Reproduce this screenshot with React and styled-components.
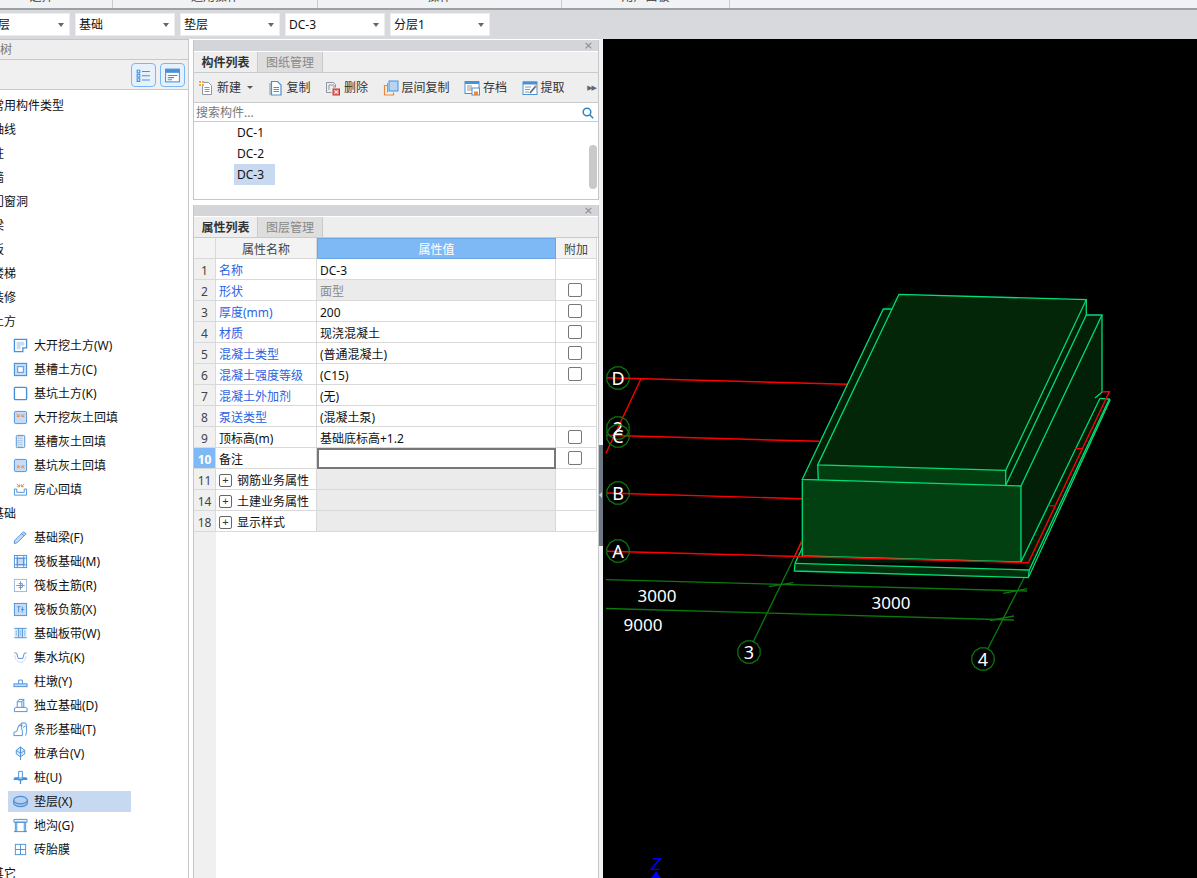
import React from 'react';
import styled, { createGlobalStyle } from 'styled-components';

const GlobalStyle = createGlobalStyle`
  html, body { margin:0; padding:0; background:#fff; overflow:hidden; }
  body { font-family:"Noto Sans","Noto Sans CJK SC",sans-serif; font-size:12px; color:#111; }
  * { box-sizing:border-box; }
`;

const Page = styled.div`
  width:1197px; height:878px; overflow:hidden;
  display:flex; flex-direction:column;
`;

const Ribbon = styled.div`
  height:10px; flex:none; display:flex; overflow:hidden;
  margin-left:-29px;
  background:#f1f2f3;
  border-bottom:2px solid #9da0a4;
`;
const RibbonCell = styled.div`
  width:${({w})=>w}px; height:8px; flex:none;
  display:flex; align-items:flex-end; justify-content:center;
  padding-bottom:4px; line-height:14px; color:#444;
  border-right:1px solid #c9cbce;
`;

const FilterBar = styled.div`
  height:29px; flex:none; display:flex; gap:5px; align-items:flex-start;
  padding-top:3px; margin-left:-30px;
  background:#d7d9dc;
`;
const Select = styled.div`
  width:100px; height:23px; flex:none; background:#fff;
  border:1px solid #eceded;
  display:flex; align-items:center; justify-content:space-between;
  padding:0 5px 0 3px; line-height:21px; color:#111;
  &::after {
    content:''; border-left:3.5px solid transparent; border-right:3.5px solid transparent;
    border-top:4px solid #666;
  }
`;

const Workspace = styled.div`
  flex:1; min-height:0; display:flex;
`;

const LeftPanel = styled.div`
  width:189px; flex:none; overflow:hidden; display:flex; flex-direction:column;
  border-right:1px solid #c8c8c8;
`;
const LeftTitle = styled.div`
  height:21px; flex:none; margin-left:-24px; padding-left:0;
  background:#eee; border-top:1px solid #c4c6c9; border-bottom:1px solid #c8c8c8;
  line-height:19px; color:#777; width:213px;
`;
const LeftTools = styled.div`
  height:30px; flex:none; background:#f0f0f0; border-bottom:1px solid #c8c8c8;
  display:flex; justify-content:flex-end; gap:4px; padding:3px 3px 0 0;
`;
const ViewButton = styled.div`
  width:25px; height:24px; background:#e6f1fc; border:1.5px solid #7ab8f5; border-radius:4px;
  display:flex; align-items:center; justify-content:center;
`;
const Tree = styled.div`
  flex:1; min-height:0; padding-top:3px; background:#fff;
  display:flex; flex-direction:column;
`;
const GroupRow = styled.div`
  flex:none; height:24px; line-height:26px; margin-left:-8px; white-space:nowrap; color:#111;
`;
const ItemRow = styled.div`
  flex:none; width:123px; height:21px; margin:1.5px 0 1.5px 8px; padding-left:5px;
  display:flex; align-items:center; gap:6px; white-space:nowrap; line-height:21px;
  background:${({selected})=>selected ? '#c7d9f0' : 'transparent'};
  svg { flex:none; }
`;

const MiddleColumn = styled.div`
  width:410px; flex:none; padding:1px 0 0 4px; display:flex; flex-direction:column; gap:5px;
  background:#fff;
`;
const Panel = styled.div`
  display:flex; flex-direction:column; overflow:hidden;
  border:1px solid #c4c7cc; border-top:0;
  border-bottom-width:${({h})=>h ? 1 : 0}px;
  height:${({h})=>h ? `${h}px` : 'auto'};
  flex:${({h})=>h ? 'none' : '1'};
  min-height:0;
  width:406px;
`;
const PanelTitle = styled.div`
  height:11px; flex:none; background:#d3d5d9; color:#888;
  display:flex; align-items:center; justify-content:flex-end; padding-right:5px;
  font-size:11px; line-height:11px;
  font-family:"DejaVu Sans",sans-serif;
`;
const TabBar = styled.div`
  height:22px; flex:none; display:flex; background:#eee;
  border-top:1px solid #fff; border-bottom:1px solid #c8cacd;
`;
const Tab = styled.div`
  width:${({active})=>active ? 64 : 65}px; text-align:center; line-height:22px;
  background:${({active})=>active ? '#eee' : '#dedede'};
  color:${({active})=>active ? '#333' : '#888'};
  font-weight:${({active})=>active ? 700 : 400};
  border-right:1px solid #c8cacd;
`;
const Toolbar = styled.div`
  height:30px; flex:none; background:#eee; border-bottom:1px solid #c8cacd;
  display:flex; align-items:center; gap:14.5px; padding-left:4px; position:relative;
`;
const ToolButton = styled.div`
  display:flex; align-items:center; gap:3px; white-space:nowrap; color:#333; line-height:16px;
`;
const Caret = styled.span`
  margin-left:3px; border-left:3px solid transparent; border-right:3px solid transparent;
  border-top:3px solid #555;
`;
const MoreArrows = styled.span`
  position:absolute; right:2px; top:11px; color:#666; font-size:7px; line-height:8px; letter-spacing:-1px;
  font-family:"DejaVu Sans",sans-serif;
`;
const SearchBox = styled.div`
  height:19px; flex:none; background:#fff; border-bottom:1px solid #c8cacd;
  display:flex; align-items:center; justify-content:space-between; padding:2px 4px 0 2px;
  color:#777; line-height:16px;
`;
const ComponentList = styled.div`
  flex:1; min-height:0; background:#fff; padding-left:40px; position:relative;
`;
const ComponentRow = styled.div`
  width:41px; height:21px; line-height:21px; padding-left:3px; color:#111;
  background:${({selected})=>selected ? '#c7d9f0' : 'transparent'};
`;
const ScrollThumb = styled.div`
  position:absolute; right:1px; top:23px; width:8px; height:44px; border-radius:4px; background:#c9c9c9;
`;

const PropGrid = styled.div`
  display:grid; flex:none; grid-template-columns:22px 101px 239px 41px; grid-auto-rows:21px;
`;
const Cell = styled.div`
  border-right:1px solid #d9d9d9; border-bottom:1px solid #d9d9d9;
  line-height:24px; white-space:nowrap; overflow:hidden;
`;
const HeadCell = styled(Cell)`
  text-align:center; background:${({hot})=>hot ? '#7fb9f5' : '#f3f3f3'};
  color:${({hot})=>hot ? '#fff' : '#444'};
  ${({hot})=>hot ? 'border:1px solid #6aa6e6;line-height:22px;' : ''}
`;
const NumCell = styled(Cell)`
  text-align:center; background:${({hot})=>hot ? '#7fb9f5' : '#f0f0f0'};
  color:${({hot})=>hot ? '#fff' : '#444'};
  font-weight:${({hot})=>hot ? 700 : 400};
`;
const NameCell = styled(Cell)`
  padding:3px 0 0 3px; line-height:18px; color:${({link})=>link ? '#2b62e3' : '#111'};
  display:flex; align-items:center;
`;
const ValueCell = styled(Cell)`
  padding-left:3px;
  background:${({grey})=>grey ? '#ebebeb' : '#fff'};
  color:${({muted})=>muted ? '#8a8a8a' : '#111'};
  ${({editing})=>editing ? 'border:2px solid #777;' : ''}
`;
const CheckCell = styled(Cell)`
  display:flex; justify-content:center; padding-top:3px; padding-right:2px;
`;
const CheckBox = styled.span`
  width:14px; height:14px; border:1px solid #777; border-radius:2px; background:#fff; display:block;
`;
const PlusBox = styled.span`
  width:13px; height:13px; flex:none; margin-right:5px; border:1px solid #666; border-radius:2px;
  display:flex; align-items:center; justify-content:center; font-size:11px; line-height:11px; color:#333;
  font-family:"Liberation Sans",sans-serif;
`;
const TableRest = styled.div`
  flex:1; min-height:0; background:#fff;
  &::before { content:''; display:block; width:22px; height:100%; background:#f0f0f0; }
`;

const Splitter = styled.div`
  width:4px; flex:none; background:#f2f2f2; position:relative;
`;
const SplitHandle = styled.div`
  position:absolute; left:0; top:406px; width:4px; height:101px; background:#6f7883;
  &::after {
    content:''; position:absolute; left:0; top:47px;
    border-top:3px solid transparent; border-bottom:3px solid transparent; border-right:3px solid #c9ccd0;
  }
`;
const Canvas = styled.div`
  flex:1; min-width:0; background:#000; overflow:hidden;
  svg { display:block; }
`;

const BLUE = '#4a90d9', LIGHT = '#c6dcf6', ORANGE = '#e8873a', GREY = '#8e979f';

const Svg = ({children, size=16}) => (
  <svg width={size} height={size} viewBox="0 0 16 16" fill="none" stroke={BLUE} strokeWidth="1">{children}</svg>
);

const treeIcons = {
  wa: <><path d="M1.500 1.500h13v9h-4v4h-9z" strokeWidth="1.400"/><path d="M4 4h8v4H8v4H4z" fill={LIGHT} stroke="none"/></>,
  cao: <><rect x="1.500" y="1.500" width="13" height="13" fill={LIGHT} strokeWidth="1.200"/><rect x="5" y="5" width="6" height="6" fill="#fff"/></>,
  keng: <rect x="1.500" y="1.500" width="13" height="13" rx="1" fill="#fff" strokeWidth="1.500"/>,
  wahui: <><rect x="1.500" y="1.500" width="13" height="13" rx="1.500" fill={LIGHT}/><path d="M3.500 4l3 3M6.500 4.500V7H4M12.500 4l-3 3M9.500 4.500V7H12" stroke={ORANGE}/></>,
  caohui: <><rect x="3.500" y="1.500" width="9" height="13" rx="1" fill="#e4eef9"/><path d="M5 3h6M5 5h6M5 7h6M5 9h6M5 11h6M5 13h6" stroke="#7a9cc6" strokeDasharray="1 1"/></>,
  kenghui: <><rect x="1.500" y="1.500" width="13" height="13" rx="1.500" fill={LIGHT}/><path d="M4 11l2.500-2.500M6.500 11V8.500H4M12 11L9.500 8.500M9.500 11V8.500H12" stroke={ORANGE}/></>,
  fang: <><path d="M1.500 7.500v6.500h13V7.500M1.500 7.500h2.500v3.500h8V7.500h2.500"/><path d="M4 2l3 3M7 2.500V5H4.500M12 2L9 5M9 2.500V5h2.500" stroke={ORANGE}/></>,
  liang: <><path d="M1.500 11.500L11 2l3 2-9.500 9.500-3 1z" fill={LIGHT}/><path d="M9 4l3 2"/></>,
  raft: <><rect x="1.500" y="1.500" width="13" height="13"/><rect x="4.500" y="4.500" width="7" height="7" fill={LIGHT}/><path d="M1.500 4.500h13M1.500 11.500h13M4.500 1.500v13M11.500 1.500v13"/></>,
  main: <><rect x="1.500" y="1.500" width="13" height="13" stroke="#9db6d4"/><path d="M8 3.500v9M3.500 8h9M6 6h4v4H6" stroke="#6d93bf"/></>,
  neg: <><rect x="1.500" y="1.500" width="13" height="13" fill={LIGHT}/><path d="M6 5v6M4.500 5H8M10 5v6M8.500 8H12"/></>,
  band: <><rect x="1.500" y="2.500" width="13" height="10" fill="#dbe8f7" stroke="none"/><path d="M1.500 2.500h13M1.500 12.500h13M6 2.500v10M10 2.500v10" /><path d="M3.500 5v6M8 5v6M12.500 5v6" strokeDasharray="1 1"/></>,
  sump: <><path d="M1.500 3L4 3.500 5.500 9h5L12 3.500 14.500 3"/><path d="M2 6q1 7 6 7t6-7" stroke="#8fb3da" strokeDasharray="1 1"/></>,
  pier: <><rect x="1" y="10.500" width="14" height="3" fill={LIGHT}/><path d="M6 10.500v-4h4v4"/></>,
  iso: <><path d="M1.500 11l2-1h10l1.500 1v3.500h-13.500z" fill="#fff"/><path d="M4.500 10V4l2-2.500h5V10M4.500 4h5v6M9.500 4l2-2.500"/></>,
  strip: <><path d="M1 14.500V11l3-1 2-6 3.500-3h4l1 3v6l-1 4.500"/><path d="M1 14.500h9V10l-1-4 .5-5M6 4h4"/><path d="M10.500 6l3-2" /></>,
  cap: <><path d="M8 1l4.500 3.500v4L8 11.500 3.500 8.500v-4z" fill="#dbe8f7"/><path d="M8 1v14M3.500 4.500L8 8l4.500-3.500" /></>,
  pile: <><path d="M6 1.500h4v7H6z" fill="#fff"/><path d="M1.500 8.500h4l.5 2h4l.5-2h4M1.500 8.500v1.500h13V8.500M8 11v4" strokeWidth="1.400"/></>,
  dian: <><path d="M.7 6.500v3c0 2.200 3.300 4 7.300 4s7.300-1.800 7.300-4v-3" fill="#a9c8ec" strokeWidth="1.300"/><ellipse cx="8" cy="6.500" rx="7.300" ry="4" fill="#b4cfef" strokeWidth="1.300"/></>,
  digou: <><path d="M1 1.500h14v3H1zM1 14.500h14M2.500 4.500H4v10H2.500zM12 4.500h1.500v10H12z" fill="#eef5fc"/><path d="M4 4.500h8" /></>,
  zhuo: <><rect x="2.500" y="2.500" width="11" height="11" /><path d="M8 2.500v11M2.500 8h11"/></>,
};

const TreeIcon = ({name}) => <Svg size={15}>{treeIcons[name]}</Svg>;

const toolIcons = {
  create: <><path d="M4.500 2.500h6l3 3v9h-9z" fill="#fff" stroke={GREY}/><path d="M6.500 7.500h5M6.500 9.500h5M6.500 11.500h5" stroke={GREY}/><rect x="1" y="1" width="5" height="5" fill="#f2a640" stroke="none"/><path d="M1 3.500h5M3.500 1v5" stroke="#fff"/></>,
  copy: <><path d="M2 3v12" stroke={GREY}/><path d="M3.500 1.500h6l3.500 3.500v10h-9.500z" fill="#fff" strokeWidth="1.200"/><path d="M5.500 7.500h5.500M5.500 9.500h5.500M5.500 11.500h5.500"/></>,
  remove: <><path d="M1.500 2.500h7l2 2v3M1.500 2.500v10h5" stroke={GREY}/><path d="M4 5h5v3M4 5v5" stroke={GREY}/><rect x="8" y="9" width="6.500" height="6" fill="#e47a7a" stroke="#c33"/><path d="M9.500 10.500l3.500 3M13 10.500l-3.500 3" stroke="#fff"/></>,
  layer: <><path d="M4.500 5.500H1.500v9.500h9v-2.500" stroke={ORANGE} strokeWidth="1.200"/><path d="M4.500 3v9.500" stroke={ORANGE} strokeWidth="1"/><rect x="6" y="1" width="9" height="10" fill="#b8d4f5" strokeWidth="1"/></>,
  archive: <><rect x="1" y="1.500" width="14" height="12" fill="#fff"/><rect x="1" y="1" width="14" height="3" fill={BLUE} stroke="none"/><path d="M3 6h5M3 8h5M3 10h5" stroke={GREY}/><rect x="8" y="8" width="7.500" height="7" fill="#fff"/><rect x="10" y="11.500" width="4" height="3.500" fill={ORANGE} stroke="none"/></>,
  extract: <><rect x="1" y="2" width="14" height="12.500" fill="#fff"/><rect x="1" y="1.500" width="14" height="3" fill={BLUE} stroke="none"/><path d="M3 7h6M3 9.500h5M3 12h4" stroke={GREY}/><path d="M8 13l5.500-6.500" stroke="#5a6b7a" strokeWidth="1.800"/><path d="M13 5.500l1.500 1.500" stroke={ORANGE} strokeWidth="1.500"/></>,
};

const ribbonCells = [['选择',142],['通用操作',205],['操作',244],['用户面板',168]];
const filters = ['基础层','基础','垫层','DC-3','分层1'];

const tree = [
  {g:'常用构件类型'},{g:'轴线'},{g:'柱'},{g:'墙'},{g:'门窗洞'},{g:'梁'},{g:'板'},{g:'楼梯'},{g:'装修'},{g:'土方'},
  {t:'大开挖土方(W)',i:'wa'},{t:'基槽土方(C)',i:'cao'},{t:'基坑土方(K)',i:'keng'},{t:'大开挖灰土回填',i:'wahui'},
  {t:'基槽灰土回填',i:'caohui'},{t:'基坑灰土回填',i:'kenghui'},{t:'房心回填',i:'fang'},
  {g:'基础'},
  {t:'基础梁(F)',i:'liang'},{t:'筏板基础(M)',i:'raft'},{t:'筏板主筋(R)',i:'main'},{t:'筏板负筋(X)',i:'neg'},
  {t:'基础板带(W)',i:'band'},{t:'集水坑(K)',i:'sump'},{t:'柱墩(Y)',i:'pier'},{t:'独立基础(D)',i:'iso'},
  {t:'条形基础(T)',i:'strip'},{t:'桩承台(V)',i:'cap'},{t:'桩(U)',i:'pile'},{t:'垫层(X)',i:'dian',selected:true},
  {t:'地沟(G)',i:'digou'},{t:'砖胎膜',i:'zhuo'},
  {g:'其它'},
];

const tools = [
  {t:'新建',i:'create',caret:true},{t:'复制',i:'copy'},{t:'删除',i:'remove'},
  {t:'层间复制',i:'layer'},{t:'存档',i:'archive'},{t:'提取',i:'extract'},
];

const props = [
  {n:1,name:'名称',value:'DC-3',link:true},
  {n:2,name:'形状',value:'面型',link:true,check:true,grey:true,muted:true},
  {n:3,name:'厚度(mm)',value:'200',link:true,check:true},
  {n:4,name:'材质',value:'现浇混凝土',link:true,check:true},
  {n:5,name:'混凝土类型',value:'(普通混凝土)',link:true,check:true},
  {n:6,name:'混凝土强度等级',value:'(C15)',link:true,check:true},
  {n:7,name:'混凝土外加剂',value:'(无)',link:true},
  {n:8,name:'泵送类型',value:'(混凝土泵)',link:true},
  {n:9,name:'顶标高(m)',value:'基础底标高+1.2',check:true},
  {n:10,name:'备注',value:'',check:true,editing:true},
  {n:11,name:'钢筋业务属性',group:true,grey:true},
  {n:14,name:'土建业务属性',group:true,grey:true},
  {n:18,name:'显示样式',group:true,grey:true},
];

const EDGE = '#00dd77', RED = '#ff0000', DIM = '#0b7a0b';

const Bubble = ({x, y, label}) => {
  const pts = Array.from({length:12}, (_, i) => {
    const a = (i * Math.PI) / 6 + Math.PI / 12;
    return `${(x + 11.5 * Math.cos(a)).toFixed(1)},${(y + 11.5 * Math.sin(a)).toFixed(1)}`;
  }).join(' ');
  return (
    <g>
      <polygon points={pts} fill="none" stroke={DIM} strokeWidth="1.200" />
      <text x={x} y={y + 6.500} textAnchor="middle" fontSize="18" fill="#fff" fontFamily="Noto Sans, sans-serif">{label}</text>
    </g>
  );
};

const Line = ({d, c=EDGE, w=1.300}) => <path d={d} stroke={c} strokeWidth={w} fill="none" />;

const Model = () => (
  <svg width="594" height="839" viewBox="603 39 594 839">
    {/* grid lines behind the model */}
    <Line c={RED} w={1.400} d="M606.700 377.700L847.300 384.300" />
    <Line c={RED} w={1.400} d="M606.700 435.300L819.300 441.300" />
    <Line c={RED} w={1.400} d="M606.700 493L802.300 498.700" />
    <Line c={RED} w={1.400} d="M641 378.700L606 453.300" />
    <Line c={DIM} d="M606 579.700L1027 591" />
    <Line c={DIM} d="M606 608.500L1014 620" />
    <Line c={DIM} d="M769 586.700L793.300 582.700M1003.300 593.300L1027.300 588.700M990 620.500L1014 616" />
    <Line c={DIM} d="M753.300 641.700L801.700 541.700" />
    <Line c={DIM} d="M988 648.500L1024 578" />

    {/* base slab */}
    <polygon points="795,563.300 1029.300,570 1028.300,577.700 794.300,571" fill="#02300c" />
    <polygon points="795,563.300 802.300,548 1021,562 1029.300,570 1109.300,399 1100,398.300 1021,562" fill="#011a06" />
    <Line d="M795 563.300L1029.300 570L1109.300 399L1100 398.300" />
    <Line d="M795 563.300L794.300 571L1028.300 577.700L1110 400L1109.300 399" />
    <Line d="M1029.300 570L1028.300 577.700" />
    <Line d="M795 563.300L802.300 548" />

    {/* block */}
    <polygon points="883.300,309 899,294.300 1086.300,299.700 1086.300,315 1102,315 1102,392.300 1021,562 802.300,556 802.300,479.300" fill="#021f08" />
    <polygon points="899,294.300 1086.300,299.700 1005.700,470.300 817.700,465" fill="#032508" />
    <polygon points="817.700,465 1005.700,470.300 1005.700,485.300 818.300,480.300" fill="#023f10" />
    <polygon points="802.300,479.300 1021,486 1021,562 802.300,556" fill="#024012" />
    <Line d="M899 294.300L1086.300 299.700L1005.700 470.300L817.700 465L899 294.300Z" />
    <Line d="M817.700 465L818.300 480.300M1005.700 470.300V485.300" />
    <Line d="M891.700 309H883.300L802.300 479.300L1021 486V562L802.300 556V479.300" />
    <Line d="M1086.300 299.700V315H1102V392.300L1095 398" />
    <Line d="M1102 315L1021 486" />
    <Line d="M1086.300 315L1005.700 485.300" />
    <Line d="M1021 562L1100 398.300" />

    {/* red outline on top */}
    <Line c={RED} w={1.400} d="M606.700 551.300L1028.300 562.700L1109.300 391.700H1102" />
    <Line c={RED} w={1.400} d="M795 555.700L801.700 541" />
    <Line c={RED} w={1.200} d="M1075 448.300L1082.700 448.700M1048.300 505.700L1055.700 506" />

    <Bubble x={618} y={378} label="D" />
    <Bubble x={618} y={428} label="2" />
    <Bubble x={618} y={436} label="C" />
    <Bubble x={618} y={493} label="B" />
    <Bubble x={618} y={551} label="A" />
    <Bubble x={749} y={652} label="3" />
    <Bubble x={983} y={659} label="4" />

    <g fontFamily="Noto Sans, sans-serif" fontSize="17" fill="#fff" textAnchor="middle">
      <text x="657" y="602">3000</text>
      <text x="891" y="609">3000</text>
      <text x="643" y="631">9000</text>
    </g>
    <text x="656" y="870" textAnchor="middle" fontSize="16" fill="#0000ff" fontStyle="italic" fontFamily="Liberation Sans, sans-serif">Z</text>
    <polygon points="656,871 651,878 661,878" fill="#0000ff" />
  </svg>
);

const App = () => (
  <Page>
    <GlobalStyle />
    <Ribbon>
      {ribbonCells.map(([label, w]) => <RibbonCell key={label} w={w}>{label}</RibbonCell>)}
    </Ribbon>
    <FilterBar>
      {filters.map((f) => <Select key={f}>{f}</Select>)}
    </FilterBar>
    <Workspace>
      <LeftPanel>
        <LeftTitle>构件树</LeftTitle>
        <LeftTools>
          <ViewButton>
            <Svg size={17}><path d="M2 3h2.500v2.500H2zM2 7h2.500v2.500H2zM2 11h2.500v2.500H2zM6.500 4.200H14M6.500 8.200H14M6.500 12.200H14"/></Svg>
          </ViewButton>
          <ViewButton>
            <Svg size={17}><rect x="1.500" y="2" width="13" height="12" fill="#fff"/><rect x="1.500" y="2" width="13" height="3.500" fill={BLUE} stroke="none"/><path d="M3.500 8h9M3.500 10h6M3.500 12h4"/></Svg>
          </ViewButton>
        </LeftTools>
        <Tree>
          {tree.map((row) => row.g
            ? <GroupRow key={row.g}>{row.g}</GroupRow>
            : <ItemRow key={row.t} selected={row.selected}><TreeIcon name={row.i} />{row.t}</ItemRow>
          )}
        </Tree>
      </LeftPanel>

      <MiddleColumn>
        <Panel h={160}>
          <PanelTitle>×</PanelTitle>
          <TabBar><Tab active>构件列表</Tab><Tab>图纸管理</Tab></TabBar>
          <Toolbar>
            {tools.map((tool) => (
              <ToolButton key={tool.t}>
                <Svg>{toolIcons[tool.i]}</Svg>
                {tool.t}
                {tool.caret && <Caret />}
              </ToolButton>
            ))}
            <MoreArrows>▶▶</MoreArrows>
          </Toolbar>
          <SearchBox>
            搜索构件...
            <svg width="12" height="12" viewBox="0 0 12 12" fill="none" stroke="#2a86c8" strokeWidth="1.500">
              <circle cx="5" cy="5" r="3.800" /><path d="M8 8l3.200 3.200" />
            </svg>
          </SearchBox>
          <ComponentList>
            <ComponentRow>DC-1</ComponentRow>
            <ComponentRow>DC-2</ComponentRow>
            <ComponentRow selected>DC-3</ComponentRow>
            <ScrollThumb />
          </ComponentList>
        </Panel>

        <Panel>
          <PanelTitle>×</PanelTitle>
          <TabBar><Tab active>属性列表</Tab><Tab>图层管理</Tab></TabBar>
          <PropGrid>
            <HeadCell />
            <HeadCell>属性名称</HeadCell>
            <HeadCell hot>属性值</HeadCell>
            <HeadCell>附加</HeadCell>
            {props.map((p) => (
              <React.Fragment key={p.n}>
                <NumCell hot={p.editing}>{p.n}</NumCell>
                <NameCell link={p.link}>
                  {p.group && <PlusBox>+</PlusBox>}
                  {p.name}
                </NameCell>
                <ValueCell grey={p.grey} muted={p.muted} editing={p.editing}>{p.value}</ValueCell>
                <CheckCell>{p.check && <CheckBox />}</CheckCell>
              </React.Fragment>
            ))}
          </PropGrid>
          <TableRest />
        </Panel>
      </MiddleColumn>

      <Splitter><SplitHandle /></Splitter>
      <Canvas><Model /></Canvas>
    </Workspace>
  </Page>
);

export default App;
